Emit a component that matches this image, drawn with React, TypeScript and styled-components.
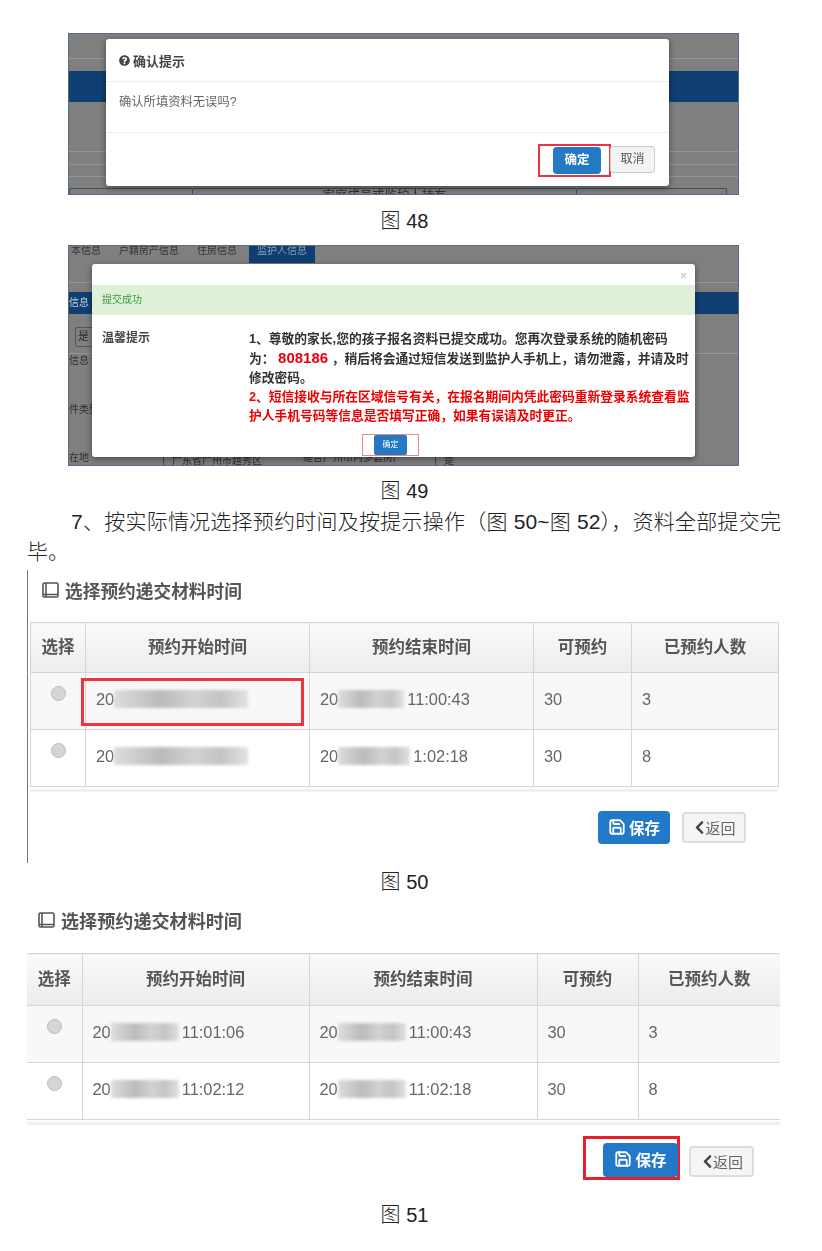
import React from "react"
import styled, { createGlobalStyle } from "styled-components"
import { FaQuestionCircle, FaChevronLeft } from "react-icons/fa"
import { Save } from "lucide-react"

const sans = `"Liberation Sans", "Noto Sans CJK SC", sans-serif`

interface Slot {
  start: string
  startMask: number
  startEnd: string
  end: string
  endMask: number
  endEnd: string
  count: string
}

const firstRows: Slot[] = [
  { start: "20", startMask: 134, startEnd: "", end: "20", endMask: 66, endEnd: "11:00:43", count: "3" },
  { start: "20", startMask: 134, startEnd: "", end: "20", endMask: 72, endEnd: "1:02:18", count: "8" },
]

const secondRows: Slot[] = [
  { start: "20", startMask: 68, startEnd: "11:01:06", end: "20", endMask: 68, endEnd: "11:00:43", count: "3" },
  { start: "20", startMask: 68, startEnd: "11:02:12", end: "20", endMask: 68, endEnd: "11:02:18", count: "8" },
]

const headers = ["选择", "预约开始时间", "预约结束时间", "可预约", "已预约人数"]

function PanelIcon() {
  return (
    <svg width="18" height="18" viewBox="0 0 18 18" fill="none" stroke="#555" strokeWidth="1.6">
      <rect x="1" y="2" width="15" height="14" rx="1.5" />
      <path d="M4 2v14M1 13.5h15" />
    </svg>
  )
}

function SlotTable({
  rows,
  widths,
  headHeight,
  marked,
  open,
}: {
  rows: Slot[]
  widths: number[]
  headHeight: number
  marked?: boolean
  open?: boolean
}) {
  return (
    <Table $open={open}>
      <colgroup>
        {widths.map((w) => (
          <col key={w} width={w} />
        ))}
      </colgroup>
      <thead>
        <tr>
          {headers.map((h) => (
            <HeadCell key={h} $height={headHeight}>
              {h}
            </HeadCell>
          ))}
        </tr>
      </thead>
      <tbody>
        {rows.map((row, i) => (
          <BodyRow key={i} $striped={i === 0}>
            <RadioCell>
              <Radio />
            </RadioCell>
            <Cell>
              {marked && i === 0 && <MarkBox />}
              {row.start}
              <Mask $width={row.startMask} />
              {row.startEnd}
            </Cell>
            <Cell>
              {row.end}
              <Mask $width={row.endMask} />
              {row.endEnd}
            </Cell>
            <Cell>30</Cell>
            <Cell>{row.count}</Cell>
          </BodyRow>
        ))}
      </tbody>
    </Table>
  )
}

function App() {
  return (
    <Page>
      <GlobalStyle />

      <FirstShot>
        <DimBackdrop>
          <BackLine $top={24} />
          <BlueBand $top={12} $height={31} />
          <BackLine $top={49} />
          <BackLine $top={12} />
          <BackLine $top={11} />
          <BackBoxes>
            <BackBox $width={124} />
            <BackBoxText>家庭成员或监护人持有</BackBoxText>
            <BackBox $width={151} />
          </BackBoxes>
        </DimBackdrop>
        <ConfirmModal>
          <ConfirmHeader>
            <FaQuestionCircle size={11} />
            确认提示
          </ConfirmHeader>
          <ConfirmBody>确认所填资料无误吗?</ConfirmBody>
          <ConfirmFooter>
            <RedFrame>
              <BlueButton>确定</BlueButton>
            </RedFrame>
            <GrayButton>取消</GrayButton>
          </ConfirmFooter>
        </ConfirmModal>
      </FirstShot>
      <Caption $top={14} $bottom={12}>
        图 48
      </Caption>

      <SecondShot>
        <DimBackdrop>
          <BackTabs>
            <BackTab $width={34}>本信息</BackTab>
            <BackTab $width={72}>户籍房产信息</BackTab>
            <BackTab $width={44}>住房信息</BackTab>
            <BackTab $width={66} $active>
              监护人信息
            </BackTab>
          </BackTabs>
          <BackLine $top={19} />
          <BlueBand $top={9} $height={22}>
            <SideLabel $light>信息</SideLabel>
          </BlueBand>
          <SideSelect>是</SideSelect>
          <BackLine $top={6} />
          <SideLabel>信息</SideLabel>
          <SideLabel $top={35}>件类型</SideLabel>
          <BackBottomRow>
            <SideLabel>在地</SideLabel>
            <BackField $width={100}>广东省广州市越秀区</BackField>
            <BackFieldLabel>是否广州市内多套房产</BackFieldLabel>
            <BackField $width={98}>是</BackField>
          </BackBottomRow>
        </DimBackdrop>
        <NoticeModal>
          <CloseMark>×</CloseMark>
          <GreenBar>提交成功</GreenBar>
          <NoticeBody>
            <NoticeLabel>温馨提示</NoticeLabel>
            <NoticeText>
              1、尊敬的家长,您的孩子报名资料已提交成功。您再次登录系统的随机密码
              <br />
              为： <Code>808186</Code> ，稍后将会通过短信发送到监护人手机上，请勿泄露，并请及时
              <br />
              修改密码。
              <br />
              <Warning>
                2、短信接收与所在区域信号有关，在报名期间内凭此密码重新登录系统查看监
                <br />
                护人手机号码等信息是否填写正确，如果有误请及时更正。
              </Warning>
            </NoticeText>
          </NoticeBody>
          <NoticeFooter>
            <ThinRedFrame>
              <SmallBlueButton>确定</SmallBlueButton>
            </ThinRedFrame>
          </NoticeFooter>
        </NoticeModal>
      </SecondShot>
      <Caption $top={13} $bottom={4}>
        图 49
      </Caption>

      <Paragraph>7、按实际情况选择预约时间及按提示操作（图 50~图 52），资料全部提交完毕。</Paragraph>

      <ThirdShot>
        <SectionTitle $size={17.7} $gap={21} $indent={12}>
          <PanelIcon />
          选择预约递交材料时间
        </SectionTitle>
        <SlotTable rows={firstRows} widths={[55, 224, 224, 98, 147]} headHeight={45} marked />
        <TableRule />
        <Actions>
          <SaveButton>
            <Save size={18} strokeWidth={2.4} />
            保存
          </SaveButton>
          <BackButton>
            <FaChevronLeft size={15} />
            返回
          </BackButton>
        </Actions>
      </ThirdShot>
      <Caption $top={7} $bottom={15}>
        图 50
      </Caption>

      <FourthShot>
        <SectionTitle $size={18.1} $gap={22} $indent={11}>
          <PanelIcon />
          选择预约递交材料时间
        </SectionTitle>
        <SlotTable rows={secondRows} widths={[55, 227, 228, 101, 142]} headHeight={47} open />
        <TableRule />
        <SecondActions>
          <SaveFrame>
            <WideSaveButton>
              <Save size={18} strokeWidth={2.4} />
              保存
            </WideSaveButton>
          </SaveFrame>
          <WideBackButton>
            <FaChevronLeft size={15} />
            返回
          </WideBackButton>
        </SecondActions>
      </FourthShot>
      <Caption $top={23} $bottom={0}>
        图 51
      </Caption>
    </Page>
  )
}

const GlobalStyle = createGlobalStyle`
  html, body {
    margin: 0;
    padding: 0;
    background: #fff;
  }
`

const Page = styled.div`
  width: 822px;
  height: 1251px;
  overflow: hidden;
  box-sizing: border-box;
  padding-top: 33px;
  font-family: ${sans};
  color: #333;
`

const Caption = styled.div<{ $top: number; $bottom: number }>`
  margin: ${(p) => p.$top}px 0 ${(p) => p.$bottom}px;
  padding-right: 13px;
  text-align: center;
  font-size: 20px;
  line-height: 24px;
  color: #222;
  font-weight: 300;
`

const Shot = styled.div`
  position: relative;
  width: 671px;
  margin-left: 68px;
  box-sizing: border-box;
  border: 1px solid #5a6c88;
  overflow: hidden;
  filter: blur(0.45px);
`

const FirstShot = styled(Shot)`
  height: 162px;
`

const SecondShot = styled(Shot)`
  height: 221px;
`

const DimBackdrop = styled.div`
  height: 100%;
  background: #7f7f7f;
  display: flex;
  flex-direction: column;
  font-size: 11px;
  color: #2d2d2d;
`

const BackLine = styled.div<{ $top: number }>`
  margin-top: ${(p) => p.$top}px;
  height: 1px;
  background: #959595;
  flex-shrink: 0;
`

const BlueBand = styled.div<{ $top: number; $height: number }>`
  margin-top: ${(p) => p.$top}px;
  height: ${(p) => p.$height}px;
  background: #0f3f72;
  flex-shrink: 0;
  display: flex;
  align-items: center;
`

const BackBoxes = styled.div`
  margin-top: 11px;
  display: flex;
  padding-right: 11px;
`

const BackBox = styled.div<{ $width: number }>`
  width: ${(p) => p.$width}px;
  height: 14px;
  box-sizing: border-box;
  border: 1px solid #3f4f63;
  border-radius: 2px;
  flex-shrink: 0;
`

const BackBoxText = styled.div`
  flex: 1;
  text-align: center;
  font-size: 12.4px;
  line-height: 14px;
  color: #303030;
  border-top: 1px solid #3f4f63;
`

const BackTabs = styled.div`
  display: flex;
  height: 17px;
  flex-shrink: 0;
  gap: 10px;
`

const BackTab = styled.div<{ $width: number; $active?: boolean }>`
  width: ${(p) => p.$width}px;
  text-align: center;
  line-height: 10px;
  font-size: 10px;
  white-space: nowrap;
  background: ${(p) => (p.$active ? "#0f3f72" : "transparent")};
  color: ${(p) => (p.$active ? "#8b9db3" : "#333")};
`

const SideLabel = styled.div<{ $top?: number; $light?: boolean }>`
  margin-top: ${(p) => p.$top ?? 0}px;
  font-size: 10px;
  line-height: 14px;
  color: ${(p) => (p.$light ? "#c4cfdb" : "#303030")};
`

const SideSelect = styled.div`
  margin: 13px 0 0 6px;
  width: 18px;
  height: 18px;
  border: 1px solid #555;
  border-radius: 2px;
  font-size: 11px;
  padding-left: 2px;
  line-height: 17px;
`

const BackBottomRow = styled.div`
  margin-top: auto;
  display: flex;
  align-items: flex-end;
  height: 15px;
  padding-left: 0;
  gap: 74px;
`

const BackField = styled.div<{ $width: number }>`
  width: ${(p) => p.$width}px;
  height: 10px;
  box-sizing: border-box;
  padding-left: 8px;
  font-size: 10px;
  line-height: 12px;
  border-left: 1px solid #444;
  white-space: nowrap;
  overflow: hidden;
`

const BackFieldLabel = styled.div`
  font-size: 10px;
  line-height: 10px;
  margin: 0 -42px 2px -34px;
  white-space: nowrap;
`

const ModalBox = styled.div`
  position: absolute;
  background: #fff;
  border-radius: 3px;
  box-shadow: 0 2px 6px rgba(0, 0, 0, 0.45);
  display: flex;
  flex-direction: column;
`

const ConfirmModal = styled(ModalBox)`
  left: 37px;
  top: 5px;
  width: 563px;
  height: 147px;
`

const ConfirmHeader = styled.div`
  height: 42px;
  display: flex;
  align-items: center;
  gap: 3px;
  padding-left: 13px;
  font-size: 13px;
  font-weight: 700;
  color: #444;
  border-bottom: 1px solid #eee;
`

const ConfirmBody = styled.div`
  height: 51px;
  padding: 13px 0 0 13px;
  box-sizing: border-box;
  font-size: 12.3px;
  line-height: 14px;
  color: #666;
  border-bottom: 1px solid #eee;
`

const ConfirmFooter = styled.div`
  flex: 1;
  display: flex;
  justify-content: flex-end;
  align-items: flex-start;
  padding: 11px 14px 0 0;
`

const RedFrame = styled.div`
  width: 73px;
  height: 33px;
  box-sizing: border-box;
  border: 2px solid #ee3340;
  display: flex;
  justify-content: flex-end;
  align-items: center;
  padding-right: 8px;
  margin-right: -1px;
`

const BlueButton = styled.div`
  width: 48px;
  height: 27px;
  background: #2379c4;
  color: #fff;
  border-radius: 4px;
  font-size: 12.5px;
  font-weight: 700;
  line-height: 27px;
  text-align: center;
`

const GrayButton = styled.div`
  width: 45px;
  height: 27px;
  box-sizing: border-box;
  margin-top: 2px;
  border: 1px solid #ccc;
  border-radius: 3px;
  background: #f3f3f3;
  color: #555;
  font-size: 12px;
  line-height: 25px;
  text-align: center;
`

const NoticeModal = styled(ModalBox)`
  left: 23px;
  top: 18px;
  width: 603px;
  height: 193px;
`

const CloseMark = styled.div`
  height: 21px;
  text-align: right;
  padding: 5px 8px 0 0;
  box-sizing: border-box;
  font-size: 12px;
  line-height: 14px;
  color: #bbb;
`

const GreenBar = styled.div`
  height: 30px;
  background: #dff0d8;
  color: #3c9a40;
  font-size: 10px;
  line-height: 30px;
  padding-left: 10px;
`

const NoticeBody = styled.div`
  display: flex;
  padding: 14px 0 0 10px;
`

const NoticeLabel = styled.div`
  width: 147px;
  font-size: 12px;
  font-weight: 700;
  line-height: 19px;
  color: #444;
`

const NoticeText = styled.div`
  font-size: 12.75px;
  font-weight: 700;
  line-height: 19px;
  color: #333;
  white-space: nowrap;
`

const Code = styled.span`
  color: #e60012;
  font-size: 15px;
`

const Warning = styled.span`
  color: #ee0000;
`

const NoticeFooter = styled.div`
  display: flex;
  justify-content: flex-start;
  padding: 9px 0 0 270px;
`

const ThinRedFrame = styled.div`
  width: 57px;
  height: 22px;
  box-sizing: border-box;
  border: 1px solid #e88;
  display: flex;
  justify-content: center;
`

const SmallBlueButton = styled.div`
  width: 33px;
  height: 20px;
  background: #2379c4;
  border-radius: 2px;
  color: #fff;
  font-size: 8px;
  line-height: 20px;
  text-align: center;
`

const Paragraph = styled.p`
  margin: 0;
  padding: 0 41px 0 27px;
  text-indent: 44px;
  text-align: justify;
  font-size: 21px;
  line-height: 30px;
  color: #222;
  font-weight: 300;
`

const ThirdShot = styled.div`
  margin: 3px 44px 0 27px;
  height: 293px;
  box-sizing: border-box;
  padding: 9px 0 0 2px;
  border-left: 1px solid #777;
  filter: blur(0.4px);
`

const FourthShot = styled.div`
  margin: 0 42px 0 27px;
  filter: blur(0.4px);
`

const SectionTitle = styled.div<{ $size: number; $gap: number; $indent: number }>`
  display: flex;
  align-items: center;
  gap: 5px;
  height: 22px;
  padding-left: ${(p) => p.$indent}px;
  font-size: ${(p) => p.$size}px;
  color: #555;
  font-weight: 700;
  margin-bottom: ${(p) => p.$gap}px;
`

const Table = styled.table<{ $open?: boolean }>`
  width: 100%;
  table-layout: fixed;
  border-collapse: collapse;
  border: 1px solid #d8d8d8;
  ${(p) => p.$open && "border-left: none; border-right: none;"}
  font-size: 16.4px;
  color: #666;

  ${(p) =>
    p.$open &&
    `
    th:first-child, td:first-child { border-left: none; }
    th:last-child, td:last-child { border-right: none; }
  `}
`

const HeadCell = styled.th<{ $height: number }>`
  height: ${(p) => p.$height}px;
  padding: 0 0 4px;
  font-size: 16.5px;
  color: #555;
  font-weight: 700;
  text-align: center;
  border: 1px solid #d5d5d5;
  background: linear-gradient(#fafafa, #ececec);
`

const BodyRow = styled.tr<{ $striped: boolean }>`
  height: 57px;
  background: ${(p) => (p.$striped ? "#f8f8f8" : "#fff")};
`

const Cell = styled.td`
  position: relative;
  padding: 0 0 4px 10px;
  border: 1px solid #d5d5d5;
  white-space: nowrap;
`

const RadioCell = styled.td`
  padding: 0;
  border: 1px solid #d5d5d5;
  text-align: center;
  vertical-align: top;
`

const Radio = styled.div`
  width: 15px;
  height: 15px;
  margin: 13px auto 0;
  border: 1px solid #bbb;
  border-radius: 50%;
  box-sizing: border-box;
  background: #d5d5d5;
`

const Mask = styled.span<{ $width: number }>`
  display: inline-block;
  width: ${(p) => p.$width}px;
  height: 18px;
  margin-right: 3px;
  vertical-align: -3px;
  background: linear-gradient(90deg, #ddd, #bbb 35%, #d2d2d2 60%, #c4c4c4 80%, #e2e2e2);
  filter: blur(1.5px);
`

const MarkBox = styled.div`
  position: absolute;
  left: -5px;
  top: 5px;
  width: 223px;
  height: 48px;
  box-sizing: border-box;
  border: 3px solid #ee3340;
`

const TableRule = styled.div`
  height: 3px;
  margin-top: 2px;
  background: #f0f0f0;
`

const Actions = styled.div`
  display: flex;
  justify-content: flex-end;
  align-items: center;
  gap: 12px;
  padding: 19px 32px 0 0;
`

const SecondActions = styled(Actions)`
  gap: 9px;
  padding: 11px 26px 0 0;
  align-items: flex-end;
`

const SaveFrame = styled.div`
  width: 97px;
  height: 44px;
  flex-shrink: 0;
  box-sizing: border-box;
  border: 3px solid #e8202c;
  display: flex;
  align-items: flex-end;
  justify-content: flex-end;
`

const SaveButton = styled.div`
  width: 72px;
  height: 33px;
  box-sizing: border-box;
  padding-bottom: 2px;
  display: flex;
  align-items: center;
  justify-content: center;
  gap: 3px;
  border-radius: 4px;
  background: #2379c9;
  color: #fff;
  font-size: 15.5px;
  font-weight: 700;
`

const WideSaveButton = styled(SaveButton)`
  width: 75px;
  height: 34px;
  margin-right: -1px;
`

const BackButton = styled.div`
  width: 64px;
  height: 31px;
  box-sizing: border-box;
  padding-bottom: 1px;
  display: flex;
  align-items: center;
  justify-content: center;
  border: 2px solid #ddd;
  border-radius: 4px;
  background: #f5f5f5;
  color: #666;
  font-size: 15px;

  svg {
    margin-right: -2px;
    color: #444;
  }
`

const WideBackButton = styled(BackButton)`
  width: 65px;
  margin-bottom: 3px;
`

export default App
